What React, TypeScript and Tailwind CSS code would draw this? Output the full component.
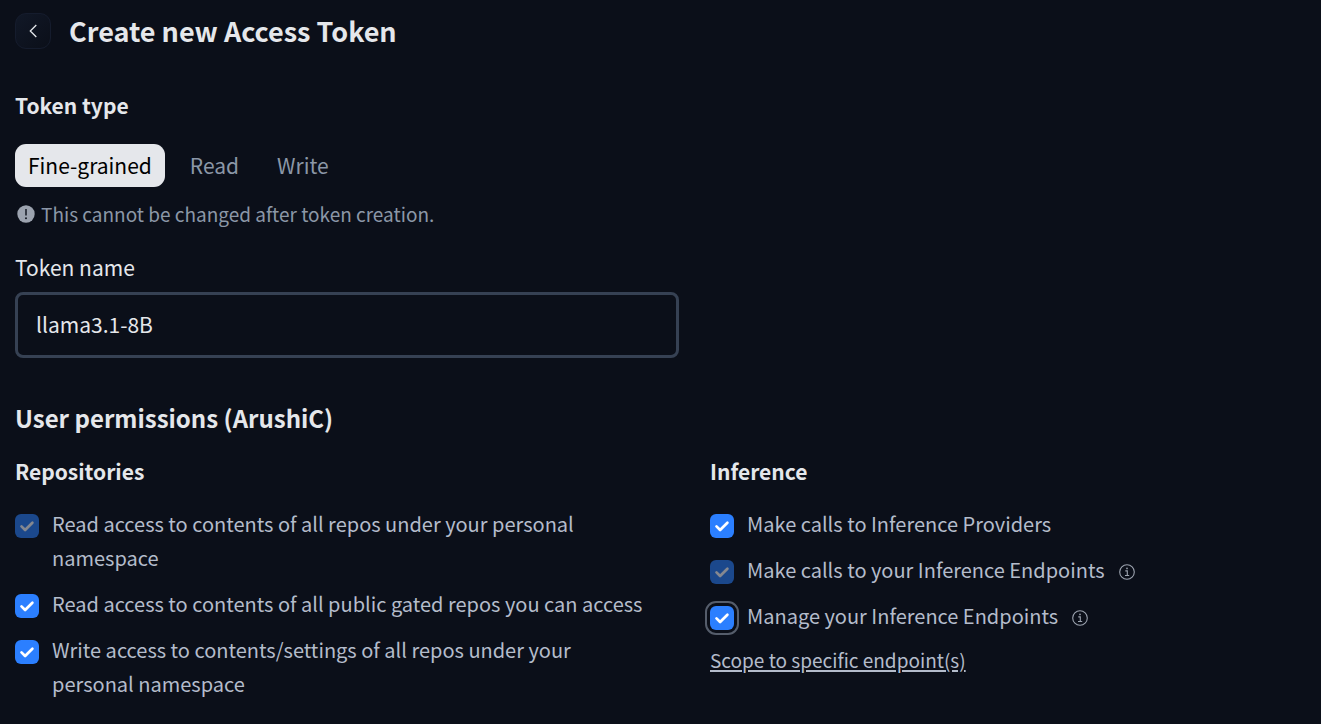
import type { ReactNode } from "react";

type PermissionProps = {
  id: string;
  disabled?: boolean;
  focused?: boolean;
  info?: boolean;
  children: ReactNode;
};

function InfoIcon() {
  return (
    <svg viewBox="0 0 16 16" className="ml-3.5 inline-block size-4 align-[-2px]" fill="none" aria-hidden="true">
      <circle cx="8" cy="8" r="7.3" stroke="#9ca3af" strokeWidth="1.1" />
      <path d="M6.3 6.900H8.300V11.500M6 11.500H10.200" stroke="#9ca3af" strokeWidth="1.1" />
      <circle cx="8" cy="4.4" r="0.85" fill="#9ca3af" />
    </svg>
  );
}

function WarningIcon() {
  return (
    <svg viewBox="0 0 18 18" className="size-[18px]" aria-hidden="true">
      <circle cx="9" cy="9" r="8.7" fill="#9ca3af" />
      <path d="M9 4V10.500" stroke="#0b0f19" strokeWidth="1.4" />
      <circle cx="9" cy="13.200" r="0.95" fill="#0b0f19" />
    </svg>
  );
}

function Permission({ id, disabled, focused, info, children }: PermissionProps) {
  return (
    <div className="flex items-start gap-[13px]">
      <span className="mt-[7px] grid size-6 shrink-0">
        <input
          id={id}
          type="checkbox"
          defaultChecked
          disabled={disabled}
          className={
            focused
              ? "col-start-1 row-start-1 size-6 appearance-none rounded-[6px] bg-[#2b7fff] outline-2 outline-offset-[3px] outline-[#555d6b]"
              : "col-start-1 row-start-1 size-6 appearance-none rounded-[6px] bg-[#2b7fff] disabled:bg-[#1b488c]"
          }
        />
        <svg viewBox="0 0 24 24" className="pointer-events-none col-start-1 row-start-1 size-6" fill="none" aria-hidden="true">
          <path
            d="M6.500 12.400L10.100 16L17.400 8.700"
            stroke={disabled ? "#858890" : "#ffffff"}
            strokeWidth="2.700"
            strokeLinecap="round"
            strokeLinejoin="round"
          />
        </svg>
      </span>
      <label htmlFor={id} className="text-[20px] leading-[34px] text-[#b4bccb]">
        {children}
        {info && <InfoIcon />}
      </label>
    </div>
  );
}

export default function App() {
  return (
    <main className="min-h-screen bg-[#0b0f19] pt-[11px] pr-4 pb-6 pl-[15px] font-['Noto_Sans_CJK_SC',sans-serif] text-[#e5e7eb]">
      <header className="flex items-center gap-[18px]">
        <button
          type="button"
          aria-label="Back"
          className="grid size-9 place-items-center rounded-[11px] border border-[#151c2d] bg-linear-to-br from-[#111827] to-[#0b0f19]"
        >
          <svg viewBox="0 0 16 16" className="size-4" fill="none" aria-hidden="true">
            <path d="M11.300 2L5.300 8L11.300 14" stroke="#e5e7eb" strokeWidth="1.300" />
          </svg>
        </button>
        <h1 className="text-[27px] leading-10 font-bold">Create new Access Token</h1>
      </header>

      <section className="mt-[38px]">
        <h2 className="text-[21px] leading-8 font-bold">Token type</h2>
        <div className="mt-[23px] flex gap-3 text-[21px] leading-[33px]">
          <button type="button" className="rounded-[11px] bg-[#e5e7eb] px-[13px] py-[5px] text-black">
            Fine-grained
          </button>
          <button type="button" className="px-[13px] py-[5px] text-[#8b97a7]">
            Read
          </button>
          <button type="button" className="px-[13px] py-[5px] text-[#8b97a7]">
            Write
          </button>
        </div>
        <p className="mt-[11px] flex items-center gap-[6px] pl-0.5 text-[19px] leading-8 text-[#8b97a7]">
          <WarningIcon />
          This cannot be changed after token creation.
        </p>
      </section>

      <div className="mt-[21px] grid grid-cols-[664fr_595fr] gap-[31px]">
        <div>
          <label htmlFor="token-name" className="block text-[21px] leading-8">
            Token name
          </label>
          <input
            id="token-name"
            type="text"
            defaultValue="llama3.1-8B"
            className="mt-[9px] block h-[66px] w-full rounded-lg border-[3px] border-[#364153] bg-transparent px-[18px] pb-0.5 text-[21px]"
          />
        </div>
      </div>

      <section className="mt-[42px]">
        <h2 className="text-[24px] leading-9 font-bold">User permissions (ArushiC)</h2>
        <div className="mt-[19px] grid grid-cols-[664fr_595fr] gap-[31px]">
          <div className="pr-8">
            <h3 className="text-[21px] leading-8 font-bold">Repositories</h3>
            <div className="mt-5 flex flex-col gap-3">
              <Permission id="read-personal" disabled>
                Read access to contents of all repos under your personal namespace
              </Permission>
              <Permission id="read-gated">Read access to contents of all public gated repos you can access</Permission>
              <Permission id="write-personal">
                Write access to contents/settings of all repos under your personal namespace
              </Permission>
            </div>
          </div>
          <div>
            <h3 className="text-[21px] leading-8 font-bold">Inference</h3>
            <div className="mt-5 flex flex-col gap-3">
              <Permission id="inference-providers">Make calls to Inference Providers</Permission>
              <Permission id="inference-endpoints" disabled info>
                Make calls to your Inference Endpoints
              </Permission>
              <Permission id="manage-endpoints" focused info>
                Manage your Inference Endpoints
              </Permission>
            </div>
            <a
              href="#endpoints"
              className="mt-[11px] inline-block text-[19px] leading-8 text-[#b4bccb] underline decoration-2 underline-offset-2"
            >
              Scope to specific endpoint(s)
            </a>
          </div>
        </div>
      </section>
    </main>
  );
}
